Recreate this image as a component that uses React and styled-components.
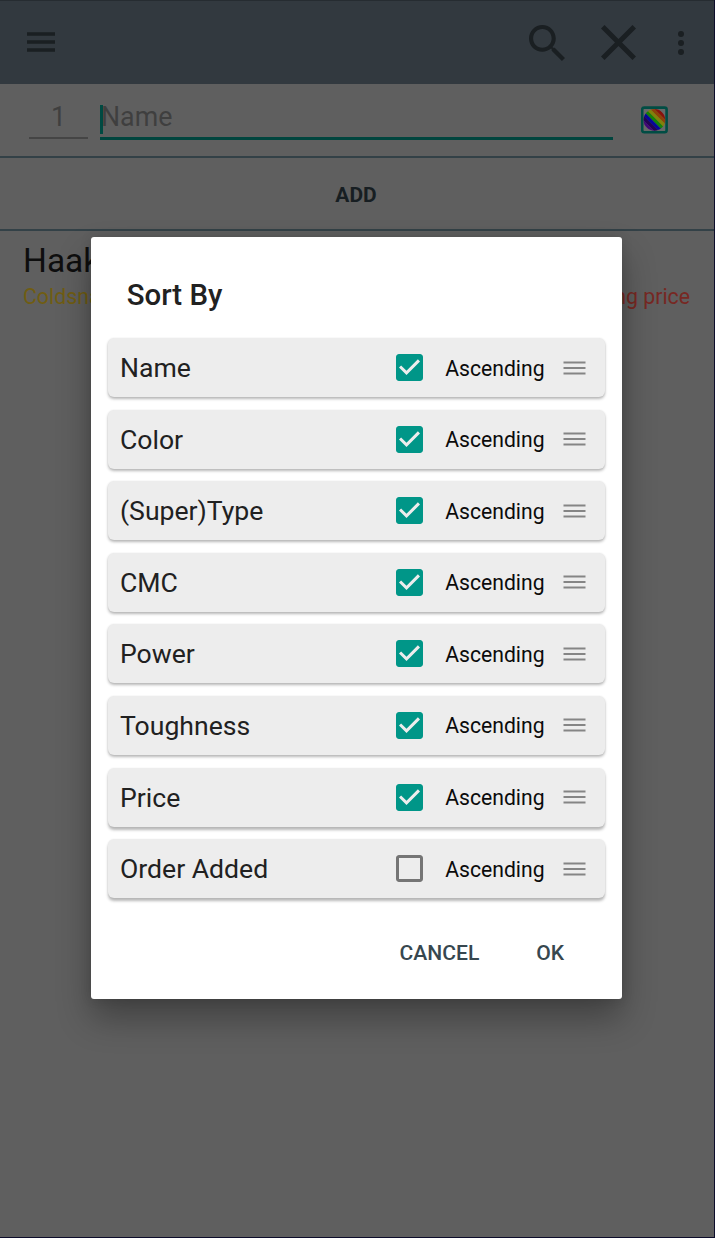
import React from "react";
import styled, { createGlobalStyle } from "styled-components";

const GlobalStyle = createGlobalStyle`
  * { box-sizing: border-box; }
  body { margin: 0; background: #0d0d2b; font-family: Roboto, "Noto Sans", sans-serif; }
  svg { display: block; flex: none; }
`;

const Screen = styled.div`
  position: relative;
  width: 715px;
  height: 1238px;
  padding: 0 1px 1px 0;
  background: #0d0d2b;
  overflow: hidden;
`;

const Page = styled.div`
  display: flex;
  flex-direction: column;
  height: 1237px;
  background: #5f5f5f;
`;

const AppBar = styled.header`
  display: flex;
  align-items: center;
  height: 84px;
  padding: 0 30px 0 27px;
  background: #32393f;
  border-top: 1px solid #262c31;
  color: #1a1f22;
`;

const BarActions = styled.div`
  display: flex;
  align-items: center;
  margin-left: auto;
`;

const ActionSlot = styled.div`
  margin-left: ${(p) => p.$gap}px;
`;

const EntryRow = styled.div`
  display: flex;
  align-items: flex-start;
  height: 72px;
  padding-left: 29px;
`;

const Field = styled.div`
  width: ${(p) => p.$width}px;
  height: ${(p) => (p.$active ? 56 : 55)}px;
  margin-right: ${(p) => p.$gap}px;
  border-bottom: ${(p) => (p.$active ? "3px solid #00453e" : "2px solid #454545")};
  font-size: 26.8px;
  line-height: 66px;
  color: #3f3f3f;
  text-align: ${(p) => (p.$active ? "left" : "center")};
  white-space: nowrap;
`;

const Caret = styled.span`
  display: inline-block;
  width: 3px;
  height: 29px;
  margin-right: -2px;
  vertical-align: -7.5px;
  background: #004a42;
`;

const ColorButton = styled.div`
  margin-top: 22px;
`;

const AddButton = styled.div`
  height: 75px;
  border-top: 2px solid #334147;
  border-bottom: 2px solid #334147;
  color: #171e22;
  font-size: 21px;
  font-weight: 700;
  line-height: 74px;
  text-align: center;
  padding-right: 2px;
`;

const CardEntry = styled.div`
  padding: 10px 24px 0 23px;
`;

const CardName = styled.div`
  font-size: 33.5px;
  line-height: 40px;
  color: #0e0e0e;
`;

const CardMeta = styled.div`
  display: flex;
  justify-content: space-between;
  font-size: 21.3px;
  line-height: 32px;
`;

const SetName = styled.span`
  color: #705d12;
`;

const PriceNote = styled.span`
  color: #772823;
`;

const Dialog = styled.section`
  position: absolute;
  left: 91.4px;
  top: 237px;
  width: 530.2px;
  height: 762.4px;
  padding: 0 16.4px 0 16.6px;
  background: #fff;
  border-radius: 3px;
  box-shadow: 0 19px 34px rgba(0, 0, 0, 0.32), 0 0 12px rgba(0, 0, 0, 0.12);
`;

const Title = styled.h2`
  margin: 0;
  padding: 38px 0 0 18.8px;
  height: 101px;
  font-size: 29.4px;
  font-weight: 500;
  line-height: 40px;
  color: #212121;
`;

const SortList = styled.div`
  display: flex;
  flex-direction: column;
  gap: 12.6px;
`;

const SortRow = styled.div`
  display: flex;
  align-items: center;
  height: 59px;
  padding: 0 19px 0 12px;
  background: #ededed;
  border-radius: 6px;
  box-shadow: 0 ${(p) => (p.$last ? 3 : 2)}px 3px rgba(0, 0, 0, 0.28), 0 0 2px rgba(0, 0, 0, 0.07);
`;

const SortLabel = styled.span`
  width: 276.6px;
  padding-top: 1px;
  font-size: 26.6px;
  line-height: 32px;
  color: #212121;
`;

const Direction = styled.span`
  width: 118px;
  margin-left: 22px;
  padding-top: 2px;
  font-size: 21.15px;
  line-height: 28px;
  color: #0b0b0b;
`;

const Actions = styled.footer`
  display: flex;
  justify-content: flex-end;
  gap: 57px;
  padding: 39px 41px 0 0;
  font-size: 21.1px;
  font-weight: 500;
  line-height: 32px;
  color: #37474f;
`;

const MenuIcon = () => (
  <svg width="28" height="21" viewBox="0 0 28 21" fill="currentColor">
    <path d="M0 .2h28v3.5H0zM0 8.2h28v3.5H0zM0 16.2h28v3.5H0z" />
  </svg>
);

const SearchIcon = () => (
  <svg width="36" height="36" viewBox="3 3 17.49 17.49" fill="currentColor">
    <path d="M15.5 14h-.79l-.28-.27C15.41 12.59 16 11.11 16 9.5 16 5.91 13.09 3 9.5 3S3 5.91 3 9.5 5.91 16 9.5 16c1.61 0 3.09-.59 4.23-1.57l.27.28v.79l5 4.99L20.49 19l-4.99-5zm-6 0C7.01 14 5 11.99 5 9.5S7.01 5 9.5 5 14 7.01 14 9.5 11.99 14 9.5 14z" />
  </svg>
);

const CloseIcon = () => (
  <svg width="35" height="35" viewBox="5 5 14 14" fill="currentColor">
    <path d="M19 6.41L17.59 5 12 10.59 6.41 5 5 6.41 10.59 12 5 17.59 6.41 19 12 13.41 17.59 19 19 17.59 13.41 12z" />
  </svg>
);

const MoreIcon = () => (
  <svg width="6" height="24" viewBox="0 0 6 24" fill="currentColor">
    <circle cx="3" cy="3" r="3" />
    <circle cx="3" cy="12" r="3" />
    <circle cx="3" cy="21" r="3" />
  </svg>
);

const stripes = ["#88120c", "#8e4208", "#82810a", "#158207", "#06069a", "#220453", "#400777"];

const RainbowIcon = () => (
  <svg width="28" height="28" viewBox="0 0 28 28">
    <defs>
      <clipPath id="disc">
        <circle cx="13.4" cy="13.9" r="10.8" />
      </clipPath>
    </defs>
    <rect x="1.2" y="1.6" width="24.4" height="24.6" rx="2" fill="#686868" stroke="#004d44" strokeWidth="2.6" />
    <g clipPath="url(#disc)">
      <g transform="rotate(45 13.4 13.9)">
        {stripes.map((c, i) => (
          <rect key={c} x="1" y={2.9 + i * 3.15} width="25" height="3.3" fill={c} />
        ))}
      </g>
    </g>
  </svg>
);

const CheckboxIcon = ({ checked }) => (
  <svg width="27" height="27" viewBox="3 3 18 18" fill={checked ? "#009688" : "#757575"}>
    {checked ? (
      <path d="M19 3H5c-1.11 0-2 .9-2 2v14c0 1.1.89 2 2 2h14c1.11 0 2-.9 2-2V5c0-1.1-.89-2-2-2zm-9 14l-5-5 1.41-1.41L10 14.17l7.59-7.59L19 8l-9 9z" />
    ) : (
      <path d="M19 5v14H5V5h14m0-2H5c-1.1 0-2 .9-2 2v14c0 1.1.9 2 2 2h14c1.1 0 2-.9 2-2V5c0-1.1-.9-2-2-2z" />
    )}
  </svg>
);

const HandleIcon = () => (
  <svg width="23" height="14" viewBox="0 0 23 14" fill="#858585">
    <path d="M.5 .4H22.5v2H.5zM.5 6H22.5v2H.5zM.5 11.4H22.5v2H.5z" />
  </svg>
);

const criteria = [
  ["Name", true],
  ["Color", true],
  ["(Super)Type", true],
  ["CMC", true],
  ["Power", true],
  ["Toughness", true],
  ["Price", true],
  ["Order Added", false],
];

export default function App() {
  return (
    <Screen>
      <GlobalStyle />
      <Page>
        <AppBar>
          <MenuIcon />
          <BarActions>
            <SearchIcon />
            <ActionSlot $gap={36}>
              <CloseIcon />
            </ActionSlot>
            <ActionSlot $gap={42}>
              <MoreIcon />
            </ActionSlot>
          </BarActions>
        </AppBar>
        <EntryRow>
          <Field $width={59} $gap={12}>1</Field>
          <Field $width={513} $gap={27.5} $active>
            <Caret />
            Name
          </Field>
          <ColorButton>
            <RainbowIcon />
          </ColorButton>
        </EntryRow>
        <AddButton>ADD</AddButton>
        <CardEntry>
          <CardName>Haakon</CardName>
          <CardMeta>
            <SetName>Coldsnap</SetName>
            <PriceNote>Fetching price</PriceNote>
          </CardMeta>
        </CardEntry>
      </Page>
      <Dialog>
        <Title>Sort By</Title>
        <SortList>
          {criteria.map(([label, checked], i) => (
            <SortRow key={label} $last={i > 5}>
              <SortLabel>{label}</SortLabel>
              <CheckboxIcon checked={checked} />
              <Direction>Ascending</Direction>
              <HandleIcon />
            </SortRow>
          ))}
        </SortList>
        <Actions>
          <span>CANCEL</span>
          <span>OK</span>
        </Actions>
      </Dialog>
    </Screen>
  );
}
